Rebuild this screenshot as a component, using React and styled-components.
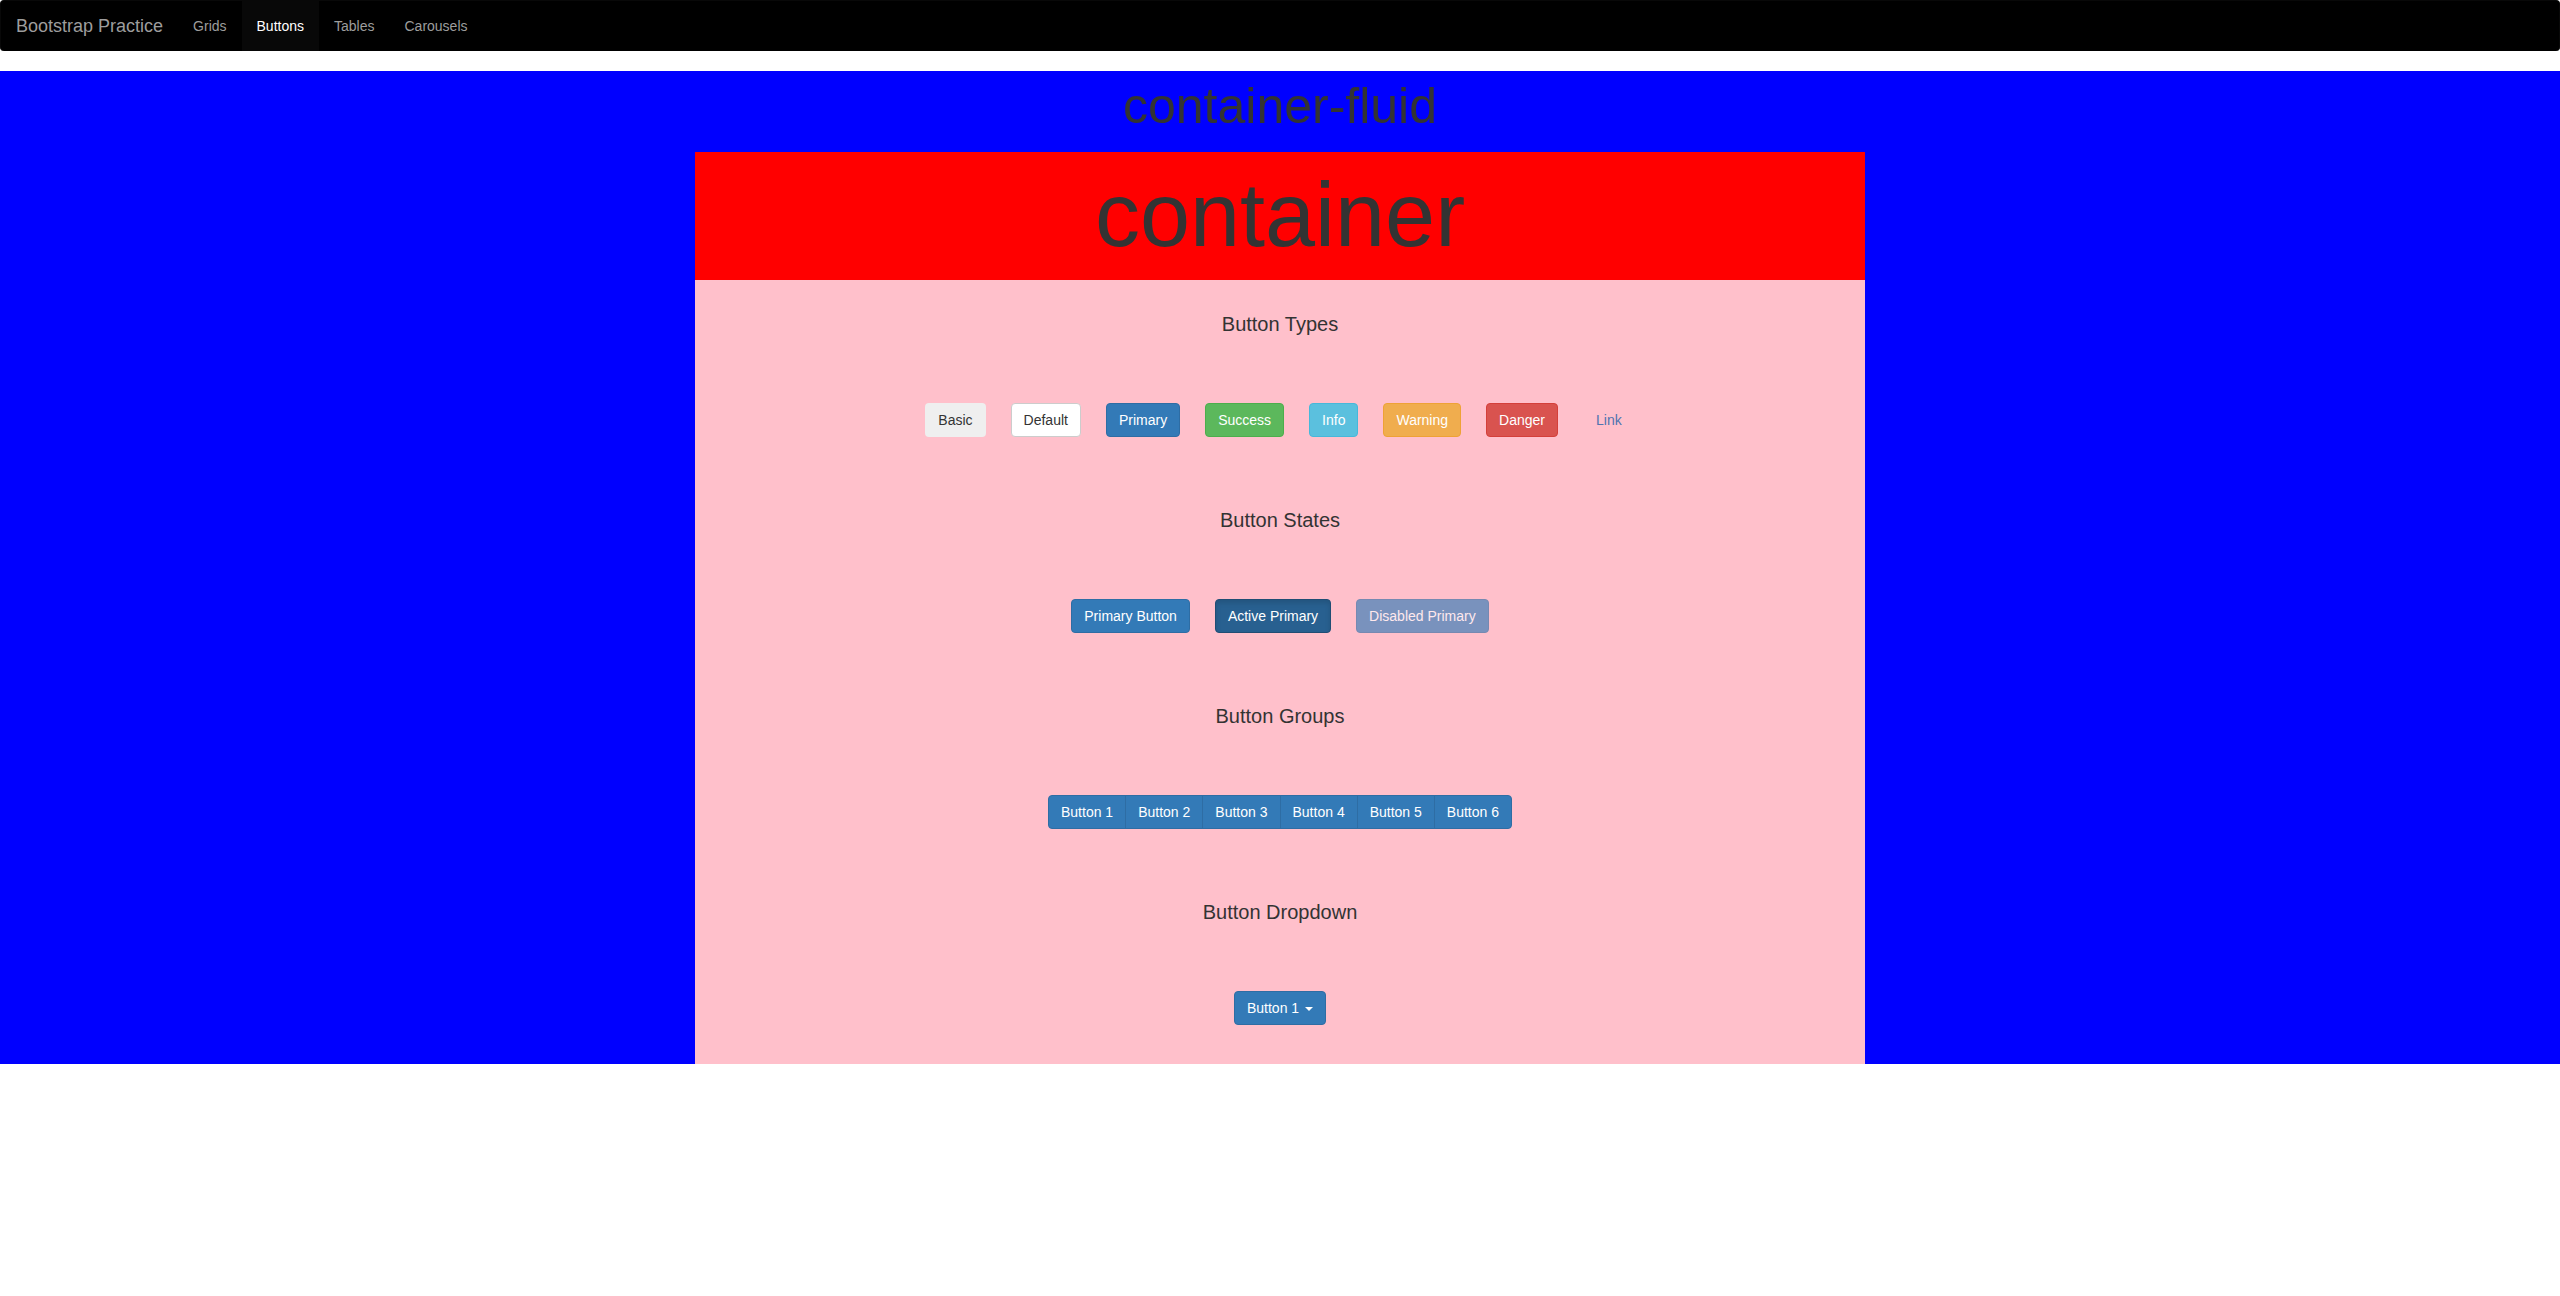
import React from "react";
import styled, { createGlobalStyle, css } from "styled-components";

const Global = createGlobalStyle`
  html, body { margin: 0; padding: 0; background: #fff; }
  body {
    font-family: "Liberation Sans", Arial, Helvetica, sans-serif;
    font-size: 14px;
    line-height: 1.42857;
    color: #333;
  }
  * { box-sizing: border-box; }
`;

const Navbar = styled.nav`
  display: flex;
  align-items: stretch;
  height: 51px;
  background: #000;
  border: 1px solid #080808;
  border-bottom: 0;
  border-radius: 4px;
  margin-bottom: 20px;
`;

const Brand = styled.a`
  display: block;
  padding: 15px 15px;
  height: 50px;
  font-size: 18px;
  line-height: 20px;
  color: #9d9d9d;
  text-decoration: none;
`;

const NavList = styled.ul`
  display: flex;
  list-style: none;
  margin: 0;
  padding: 0;
`;

const NavLink = styled.a`
  display: block;
  padding: 15px 15px;
  height: 50px;
  font-size: 14px;
  line-height: 20px;
  text-decoration: none;
  color: ${(p) => (p.$active ? "#fff" : "#9d9d9d")};
  background: ${(p) => (p.$active ? "#080808" : "transparent")};
`;

const Fluid = styled.div`
  background: #0000ff;
  padding-top: 8px;
`;

const FluidTitle = styled.h1`
  margin: 0 0 18px;
  font-size: 50px;
  line-height: 55px;
  font-weight: 500;
  text-align: center;
  color: #333;
`;

const Container = styled.div`
  width: 1170px;
  margin: 0 auto;
`;

const RedBand = styled.div`
  background: #ff0000;
  padding: 14px 0 15px;
  text-align: center;
`;

const ContainerTitle = styled.h1`
  margin: 0;
  font-size: 90px;
  line-height: 99px;
  font-weight: 500;
  color: #333;
`;

const PinkBody = styled.div`
  background: #ffc0cb;
  padding: 33px 0 39px;
  display: flex;
  flex-direction: column;
  gap: 72px;
`;

const Section = styled.section`
  display: flex;
  flex-direction: column;
  align-items: center;
  gap: 68px;
`;

const SectionTitle = styled.h3`
  margin: 0;
  font-size: 20px;
  line-height: 22px;
  font-weight: 500;
  color: #333;
  text-align: center;
`;

const ButtonRow = styled.div`
  display: flex;
  justify-content: center;
  gap: 25px;
`;

const variants = {
  basic: css`
    background: #efefef;
    color: #333;
    border-color: transparent;
  `,
  default: css`
    background: #fff;
    color: #333;
    border-color: #ccc;
  `,
  primary: css`
    background: #337ab7;
    color: #fff;
    border-color: #2e6da4;
  `,
  success: css`
    background: #5cb85c;
    color: #fff;
    border-color: #4cae4c;
  `,
  info: css`
    background: #5bc0de;
    color: #fff;
    border-color: #46b8da;
  `,
  warning: css`
    background: #f0ad4e;
    color: #fff;
    border-color: #eea236;
  `,
  danger: css`
    background: #d9534f;
    color: #fff;
    border-color: #d43f3a;
  `,
  link: css`
    background: transparent;
    color: #4f74b0;
    border-color: transparent;
  `,
  active: css`
    background: #286090;
    color: #fff;
    border-color: #204d74;
    box-shadow: inset 0 3px 5px rgba(0, 0, 0, 0.125);
  `,
};

const Btn = styled.button`
  display: inline-block;
  margin: 0;
  padding: 6px 12px;
  font-family: inherit;
  font-size: 14px;
  line-height: 20px;
  font-weight: 400;
  white-space: nowrap;
  border: 1px solid transparent;
  border-radius: 4px;
  cursor: pointer;
  ${(p) => variants[p.$variant || "default"]}
  ${(p) =>
    p.disabled &&
    css`
      opacity: 0.65;
      cursor: not-allowed;
    `}
`;

const Group = styled.div`
  display: inline-flex;
  & > ${Btn} {
    border-radius: 0;
  }
  & > ${Btn} + ${Btn} {
    margin-left: -1px;
  }
  & > ${Btn}:first-child {
    border-radius: 4px 0 0 4px;
  }
  & > ${Btn}:last-child {
    border-radius: 0 4px 4px 0;
  }
`;

const Caret = styled.span`
  display: inline-block;
  width: 0;
  height: 0;
  margin-left: 2px;
  vertical-align: middle;
  border-top: 4px dashed;
  border-right: 4px solid transparent;
  border-left: 4px solid transparent;
`;

const types = [
  ["basic", "Basic"],
  ["default", "Default"],
  ["primary", "Primary"],
  ["success", "Success"],
  ["info", "Info"],
  ["warning", "Warning"],
  ["danger", "Danger"],
  ["link", "Link"],
];

export default function App() {
  return (
    <>
      <Global />
      <Navbar>
        <Brand href="#">Bootstrap Practice</Brand>
        <NavList>
          <li><NavLink href="#">Grids</NavLink></li>
          <li><NavLink href="#" $active>Buttons</NavLink></li>
          <li><NavLink href="#">Tables</NavLink></li>
          <li><NavLink href="#">Carousels</NavLink></li>
        </NavList>
      </Navbar>
      <Fluid>
        <FluidTitle>container-fluid</FluidTitle>
        <Container>
          <RedBand>
            <ContainerTitle>container</ContainerTitle>
          </RedBand>
          <PinkBody>
            <Section>
              <SectionTitle>Button Types</SectionTitle>
              <ButtonRow>
                {types.map(([v, label]) => (
                  <Btn key={v} $variant={v}>{label}</Btn>
                ))}
              </ButtonRow>
            </Section>
            <Section>
              <SectionTitle>Button States</SectionTitle>
              <ButtonRow>
                <Btn $variant="primary">Primary Button</Btn>
                <Btn $variant="active">Active Primary</Btn>
                <Btn $variant="primary" disabled>Disabled Primary</Btn>
              </ButtonRow>
            </Section>
            <Section>
              <SectionTitle>Button Groups</SectionTitle>
              <Group>
                {[1, 2, 3, 4, 5, 6].map((n) => (
                  <Btn key={n} $variant="primary">Button {n}</Btn>
                ))}
              </Group>
            </Section>
            <Section>
              <SectionTitle>Button Dropdown</SectionTitle>
              <ButtonRow>
                <Btn $variant="primary">
                  Button 1 <Caret />
                </Btn>
              </ButtonRow>
            </Section>
          </PinkBody>
        </Container>
      </Fluid>
    </>
  );
}
